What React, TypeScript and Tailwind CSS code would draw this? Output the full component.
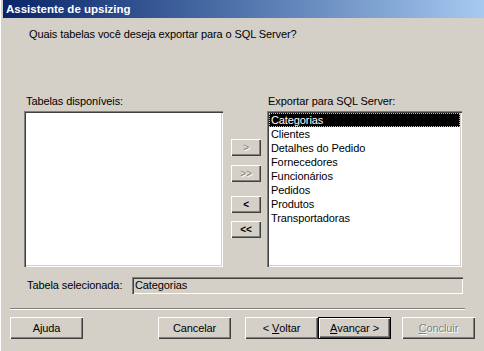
import React from 'react';

const sunken =
  'shadow-[inset_1px_1px_0_#808080,inset_2px_2px_0_#404040,inset_-1px_-1px_0_#ffffff,inset_-2px_-2px_0_#d4d0c8]';
const raised =
  'shadow-[inset_1px_1px_0_#ffffff,inset_-1px_-1px_0_#404040,inset_-2px_-2px_0_#808080]';

const tabelas = [
  'Categorias',
  'Clientes',
  'Detalhes do Pedido',
  'Fornecedores',
  'Funcionários',
  'Pedidos',
  'Produtos',
  'Transportadoras',
];

function MoveButton({ label, enabled }: { label: string; enabled: boolean }) {
  return (
    <button
      className={`w-[30px] h-[17px] flex items-center justify-center text-[10px] leading-none bg-[#d4d0c8] ${raised} ${
        enabled ? 'text-black font-bold' : 'text-[#808080] [text-shadow:1px_1px_0_#fff]'
      }`}
    >
      {label}
    </button>
  );
}

function WizButton({
  children,
  isDefault,
  disabled,
}: {
  children: React.ReactNode;
  isDefault?: boolean;
  disabled?: boolean;
}) {
  return (
    <button
      className={`w-[73px] h-[22px] flex items-center justify-center whitespace-pre bg-[#d4d0c8] ${
        isDefault ? 'border border-black' : ''
      } ${raised} ${disabled ? 'text-[#808080] [text-shadow:1px_1px_0_#fff]' : 'text-black'}`}
    >
      {children}
    </button>
  );
}

export default function App() {
  return (
    <div className="w-[484px] h-[351px] bg-[#d4d0c8] flex flex-col text-[11px] leading-[13px] tracking-[-0.1px] text-black font-['Liberation_Sans',Arial,sans-serif] border-l border-l-white overflow-hidden">
      {/* Barra de título */}
      <div className="h-[18px] ml-[2px] bg-gradient-to-r from-[#0a246a] to-[#a6caf0] flex items-center pl-[3px]">
        <span className="text-white font-bold text-[11.5px] tracking-normal">Assistente de upsizing</span>
      </div>

      <p className="mt-[10px] pl-[28px]">Quais tabelas você deseja exportar para o SQL Server?</p>

      {/* Listas */}
      <div className="mt-[54px] pl-[23px] flex">
        <div className="flex flex-col">
          <span className="pl-[2px] h-[13px]">Tabelas disponíveis:</span>
          <div className={`mt-[3px] w-[199px] h-[156px] bg-white ${sunken}`} />
        </div>

        <div className="ml-[8px] flex flex-col pt-[44px]">
          <MoveButton label=">" enabled={false} />
          <div className="mt-[9px]">
            <MoveButton label=">>" enabled={false} />
          </div>
          <div className="mt-[14px]">
            <MoveButton label="<" enabled />
          </div>
          <div className="mt-[8px]">
            <MoveButton label="<<" enabled />
          </div>
        </div>

        <div className="ml-[6px] flex flex-col">
          <span className="pl-[1px] h-[13px]">Exportar para SQL Server:</span>
          <div className={`mt-[3px] w-[195px] h-[156px] bg-white p-[2px] ${sunken}`}>
            {tabelas.map((t, i) => (
              <div
                key={t}
                className={`h-[14px] pl-[2px] leading-[14px] ${
                  i === 0 ? 'bg-black text-white outline outline-1 outline-dotted outline-[#c0c0c0] -outline-offset-1' : ''
                }`}
              >
                {t}
              </div>
            ))}
          </div>
        </div>
      </div>

      {/* Tabela selecionada */}
      <div className="mt-[10px] pl-[26px] flex items-center">
        <span className="w-[105px]">Tabela selecionada:</span>
        <div className={`w-[331px] h-[17px] flex items-center pl-[3px] ${sunken}`}>Categorias</div>
      </div>

      <div className="mt-[14px] ml-[9px] w-[455px] border-t border-t-[#808080] border-b border-b-white" />

      {/* Botões */}
      <div className="mt-[7px] pl-[9px] flex">
        <WizButton>Ajuda</WizButton>
        <div className="ml-[75px]">
          <WizButton>Cancelar</WizButton>
        </div>
        <div className="ml-[14px]">
          <WizButton>
            {'< '}
            <span className="underline">V</span>oltar
          </WizButton>
        </div>
        <WizButton isDefault>
          <span className="underline">A</span>vançar &gt;
        </WizButton>
        <div className="ml-[11px]">
          <WizButton disabled>
            <span className="underline">C</span>oncluir
          </WizButton>
        </div>
      </div>
    </div>
  );
}
